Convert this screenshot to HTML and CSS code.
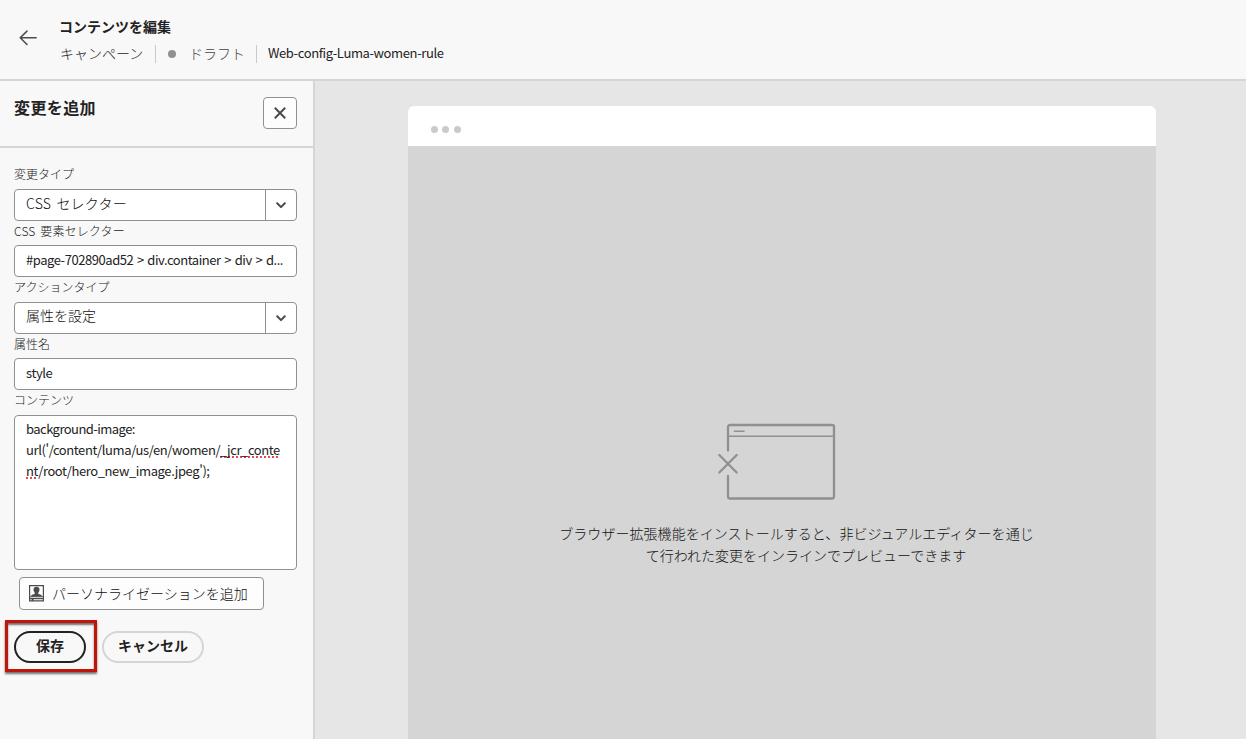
FILE: index.html
```html
<!DOCTYPE html>
<html lang="ja">
<head>
<meta charset="utf-8">
<title>コンテンツを編集</title>
<link rel="stylesheet" href="styles.css">
</head>
<body>
<div class="app">
  <header class="topbar">
    <svg class="back" width="18" height="16" viewBox="0 0 18 16"><path d="M17.2 7.8H1.2M8 1.1 1.2 7.8 8 14.5"/></svg>
    <div class="heading">
      <h1 class="title">コンテンツを編集</h1>
      <div class="meta">
        <span class="campaign">キャンペーン</span>
        <span class="divider"></span>
        <span class="status-dot"></span>
        <span class="status">ドラフト</span>
        <span class="divider"></span>
        <span class="latin name">Web-config-Luma-women-rule</span>
      </div>
    </div>
  </header>
  <div class="body">
    <aside class="sidebar">
      <div class="panel-head">
        <h2 class="panel-title">変更を追加</h2>
        <button class="close" aria-label="閉じる"><svg width="12" height="12" viewBox="0 0 12 12"><path d="M.8.8 11.2 11.2M11.2.8.8 11.2"/></svg></button>
      </div>
      <div class="form">
        <label class="label">変更タイプ</label>
        <div class="field select"><span class="value css-value">CSS セレクター</span><span class="arrow"><svg width="10" height="7" viewBox="0 0 10 7"><path d="M1.2 1.3 5 5.1 8.8 1.3"/></svg></span></div>
        <label class="label css-label">CSS 要素セレクター</label>
        <div class="field"><span class="latin selector">#page-702890ad52 &gt; div.container &gt; div &gt; d...</span></div>
        <label class="label">アクションタイプ</label>
        <div class="field select"><span class="value attr-value">属性を設定</span><span class="arrow"><svg width="10" height="7" viewBox="0 0 10 7"><path d="M1.2 1.3 5 5.1 8.8 1.3"/></svg></span></div>
        <label class="label">属性名</label>
        <div class="field"><span class="latin">style</span></div>
        <label class="label">コンテンツ</label>
        <div class="field textarea">
          <div class="latin first">background-image:</div>
          <div class="latin">url('/content/luma/us/en/women/<span class="misspelt">_jcr_conte</span></div>
          <div class="latin"><span class="misspelt">nt</span>/root/hero_new_image.jpeg');</div>
        </div>
        <button class="personalize">
          <svg width="15" height="17" viewBox="0 0 15 17"><path class="ink" fill-rule="evenodd" d="M0 0h15v16.500H0zM1.200 1.200v10h12.600v-10z"/><path class="ink" d="M2 11.500c0-1.900 1.600-2 3.300-2.600.7-.3.700-1 .1-1.700C4.800 6.500 4.500 5.600 4.500 4.700c0-1.900 1.100-3 3-3s3 1.100 3 3c0 .9-.3 1.800-.9 2.500-.6.7-.6 1.400.1 1.700 1.700.6 3.300.7 3.300 2.600z"/><path class="paper" d="M1.200 12.300h12.600v.7H1.200zM1.200 14.200h1.500v1H1.200zM4.500 14.200h9.300v1H4.500z"/></svg>
          <span>パーソナライゼーションを追加</span>
        </button>
        <div class="actions">
          <button class="pill save">保存<span class="highlight"></span></button>
          <button class="pill cancel">キャンセル</button>
        </div>
      </div>
    </aside>
    <main class="canvas">
      <div class="browser">
        <div class="browser-bar"><i class="dot"></i><i class="dot"></i><i class="dot"></i></div>
        <div class="page">
          <svg class="art" width="120" height="78" viewBox="0 0 120 78"><path stroke-width="2.300" d="M11 27.500V4Q11 2 13 2H115Q117 2 117 4V73.500Q117 75.500 115 75.500H13Q11 75.500 11 73.500V53"/><path stroke-width="1.600" d="M11 13.200H117M17.500 8.200H27"/><path stroke-width="2.300" d="M2.300 32 19.700 49.500M19.700 32 2.300 49.500"/></svg>
          <p class="message"><span class="first-line">ブラウザー拡張機能をインストールすると、非ビジュアルエディターを通じ</span><br><span class="second-line">て行われた変更をインラインでプレビューできます</span></p>
        </div>
      </div>
    </main>
  </div>
</div>
</body>
</html>
```

FILE: styles.css
```css
* { box-sizing: border-box; }
body {
  margin: 0;
  color: #111;
  font: 300 14px/20px "Noto Sans CJK JP", sans-serif;
}
h1, h2, p { margin: 0; }
button { font: inherit; color: inherit; padding: 0; }
svg { display: block; fill: none; stroke: #4b4b4b; stroke-linecap: round; stroke-linejoin: round; }
.app { width: 1246px; height: 739px; display: flex; flex-direction: column; overflow: hidden; background: #f8f8f8; }
.latin { color: #222; font-weight: 400; font-size: 13px; letter-spacing: -.4px; white-space: pre; }

.topbar { height: 81px; flex: none; display: flex; border-bottom: 2px solid #d5d5d5; }
.back { margin: 30px 22px 0 19px; stroke-width: 1.5; }
.title { margin-top: 16px; font-size: 14px; line-height: 20px; font-weight: 700; color: #222; }
.meta { display: flex; align-items: center; height: 20px; margin-top: 8px; white-space: nowrap; }
.divider { width: 1px; height: 18px; background: #cacaca; }
.campaign { color: #222; width: 96px; padding: 0 0 2px 1px; }
.status-dot { width: 8px; height: 8px; border-radius: 50%; background: #909090; margin: 0 13px 0 12px; }
.status { color: #444; width: 67px; padding-bottom: 2px; }
.name { margin-left: 11px; padding-bottom: 2px; letter-spacing: -.38px; }

.body { flex: 1; min-height: 0; display: flex; }
.sidebar { width: 315px; flex: none; border-right: 2px solid #d5d5d5; }
.panel-head { height: 67px; border-bottom: 2px solid #d5d5d5; display: flex; justify-content: space-between; padding: 16px 16px 0 14px; }
.panel-title { margin-top: -1px; font-size: 16px; line-height: 22px; font-weight: 700; letter-spacing: .4px; color: #222; }
.close { width: 34px; height: 32px; display: flex; align-items: center; justify-content: center; border: 1px solid #909090; border-radius: 4px; background: #fdfdfd; }
.close svg { stroke-width: 2; stroke-linecap: butt; }

.form { padding: 16px 16px 0 14px; }
.label { display: block; height: 24.5px; font-size: 12px; line-height: 20px; color: #222; }
.css-label { letter-spacing: .15px; word-spacing: 2px; }
.css-value { letter-spacing: .2px; word-spacing: 2px; }
.field { height: 32px; border: 1px solid #909090; border-radius: 4px; background: #fff; padding-left: 11px; display: flex; align-items: center; }
.field > .latin { padding-bottom: 2px; }
.field > .selector { letter-spacing: -.45px; word-spacing: 1.2px; }
.select { align-items: stretch; }
.value { flex: 1; line-height: 26px; }
.attr-value { line-height: 25px; }
.arrow { width: 31px; border-left: 1px solid #909090; display: flex; align-items: center; justify-content: center; }
.arrow svg { stroke-width: 2; margin-top: 1px; }
.textarea { display: block; height: 155px; padding-top: 2px; }
.field.textarea > .latin { height: 21px; line-height: 21px; padding: 0; }
.field.textarea > .first { letter-spacing: -.55px; }
.misspelt { text-decoration: underline dotted #e34850 2px; text-underline-offset: 2px; text-decoration-skip-ink: none; }
.personalize { display: flex; align-items: center; gap: 8px; width: 245px; height: 33px; margin: 7px 0 0 5px; padding-left: 9px; border: 1px solid #909090; border-radius: 4px; background: #fdfdfd; white-space: nowrap; }
.ink { fill: #4b4b4b; stroke: none; }
.paper { fill: #fff; stroke: none; }
.actions { display: flex; gap: 16px; margin-top: 21px; }
.pill { position: relative; height: 32px; border: 2px solid #d5d5d5; border-radius: 16px; background: none; color: #222; font-weight: 700; line-height: 24px; padding-bottom: 4px; }
.save { width: 72px; border-color: #222; }
.cancel { width: 102px; }
.highlight { position: absolute; left: -11px; top: -13px; width: 92px; height: 52px; border: 3px solid #c0150a; box-shadow: 0 2px 2px rgba(0,0,0,.55), inset 0 2px 2px rgba(0,0,0,.55); }

.canvas { flex: 1; background: #e6e6e6; padding: 25px 90px 0 93px; display: flex; }
.browser { flex: 1; display: flex; flex-direction: column; border-radius: 6px 6px 0 0; overflow: hidden; }
.browser-bar { height: 40px; background: #fff; display: flex; gap: 4.700px; padding: 19.500px 0 0 22.500px; }
.dot { width: 7px; height: 7px; border-radius: 50%; background: #cacaca; }
.page { flex: 1; background: #d5d5d5; padding-top: 277px; display: flex; flex-direction: column; align-items: center; }
.art { margin-right: 10px; stroke: #909090; }
.message { margin: 21px 0 0 29px; text-align: center; line-height: 22px; white-space: nowrap; }
.first-line { letter-spacing: .05px; }
.second-line { margin-left: 19px; }
```
